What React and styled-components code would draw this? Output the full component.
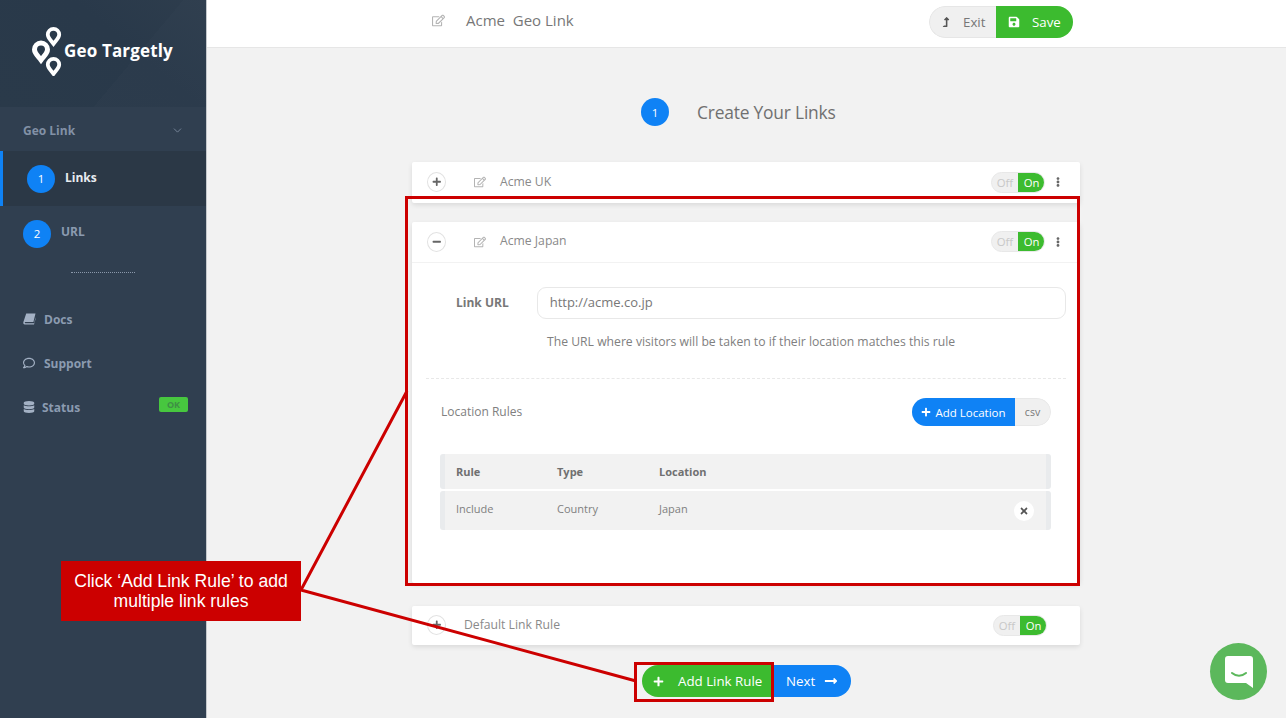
import React from "react";
import styled, { createGlobalStyle } from "styled-components";
import { ChevronDown } from "lucide-react";
import {
  FaRegEdit, FaPlus, FaMinus, FaEllipsisV, FaSave, FaTimes,
  FaRegComment, FaDatabase, FaLongArrowAltRight, FaLevelUpAlt,
} from "react-icons/fa";

const Global = createGlobalStyle`
  html, body { margin: 0; padding: 0; height: 718px; overflow: hidden; }
  body { font-family: "Open Sans", "Noto Sans", sans-serif; background: #f2f2f2; color: #666; }
  * { box-sizing: border-box; }
`;

const Page = styled.div`
  position: relative;
  display: flex;
  width: 1286px;
  height: 718px;
  overflow: hidden;
`;

const Sidebar = styled.aside`
  width: 207px;
  flex: none;
  background: #303f50;
  border-right: 1px solid #c4c8cc;
  color: #8b9bb0;
`;

const Brand = styled.div`
  height: 107px;
  background:
    linear-gradient(130deg, transparent 62%, rgba(255, 255, 255, 0.012) 62%),
    linear-gradient(40deg, #2a3a4a 0%, #29394a 60%, #2e3d4d 100%);
  display: flex;
  align-items: center;
  padding: 0 0 6px 31px;
  gap: 1px;
  color: #fff;
  font-size: 17px;
  font-weight: 700;
  letter-spacing: 0.15px;
`;

const MenuHead = styled.div`
  height: 44px;
  display: flex;
  align-items: center;
  justify-content: space-between;
  padding: 2px 22px 0 23px;
  font-size: 12px;
  font-weight: 700;
  color: #8291a6;
`;

const Step = styled.div`
  display: flex;
  align-items: center;
  height: 55px;
  gap: 10px;
  padding-left: ${p => (p.$active ? "24px" : "23px")};
  background: ${p => (p.$active ? "#2b3846" : "transparent")};
  border-left: ${p => (p.$active ? "3px solid #0f82f5" : "0")};
  color: ${p => (p.$active ? "#e8ecf0" : "#8b9bb0")};
  font-size: 12px;
  font-weight: 700;
`;

const StepNum = styled.span`
  width: 28px;
  height: 28px;
  border-radius: 50%;
  background: #0f82f5;
  color: #fff;
  display: flex;
  align-items: center;
  justify-content: center;
  font-size: 11.5px;
  font-weight: 400;
  flex: none;
`;

const StepLabel = styled.span`
  margin-bottom: ${p => (p.$active ? "2px" : "4px")};
`;

const Dots = styled.div`
  width: 64px;
  margin: 11px 0 24px 71px;
  border-top: 1px dotted #8a98aa;
`;

const NavItem = styled.div`
  display: flex;
  align-items: center;
  height: 44px;
  padding: 0 18px 0 23px;
  gap: ${p => p.$gap || 8}px;
  font-size: 12px;
  font-weight: 700;
  color: #8b9bb0;
  svg { font-size: 12px; color: #a3b1c4; flex: none; }
`;

const OkBadge = styled.span`
  margin: 0 0 5px auto;
  width: 29px;
  height: 15px;
  border-radius: 2px;
  background: #47c73f;
  color: #3f8f46;
  font-size: 9px;
  font-weight: 700;
  display: flex;
  align-items: center;
  justify-content: center;
`;

const Main = styled.main`
  flex: 1;
  min-width: 0;
  display: flex;
  flex-direction: column;
`;

const TopBar = styled.header`
  height: 48px;
  flex: none;
  background: #fff;
  border-bottom: 1px solid #e6e6e6;
  display: flex;
  align-items: center;
  padding: 0 213px 6px 225px;
  font-size: 15px;
  color: #777;
`;

const Title = styled.span`
  margin: 0 0 2px 21px;
  white-space: pre;
`;

const EditIcon = styled(FaRegEdit)`
  color: #b4b4b4;
  font-size: ${p => p.$size || 12}px;
  flex: none;
`;

const ButtonGroup = styled.div`
  margin: 2px 0 0 auto;
  display: flex;
  height: 32px;
  border-radius: 16px;
  overflow: hidden;
`;

const ExitBtn = styled.div`
  width: 67px;
  background: #f0f0f0;
  border: 1px solid #e6e6e6;
  border-right: 0;
  border-radius: 16px 0 0 16px;
  display: flex;
  align-items: center;
  padding-left: 11px;
  gap: 12px;
  font-size: 13.3px;
  color: #777;
  svg { font-size: 10px; color: #555; }
`;

const SaveBtn = styled.div`
  width: 77px;
  background: #3cbb2f;
  color: #fff;
  display: flex;
  align-items: center;
  padding-left: 12px;
  gap: 12px;
  font-size: 13.3px;
  svg { font-size: 12px; }
`;

const Content = styled.div`
  flex: 1;
  padding: 0 206px 0 205px;
`;

const Heading = styled.div`
  height: 114px;
  display: flex;
  align-items: center;
  padding: 14px 0 0 229px;
  gap: 28px;
  font-size: 17.4px;
  color: #707070;
  letter-spacing: -0.2px;
`;

const Card = styled.section`
  background: #fff;
  box-shadow: 0 2px 5px rgba(0, 0, 0, 0.1);
  border-radius: 2px;
  margin-bottom: ${p => p.$gap || 0}px;
`;

const CardHead = styled.div`
  height: ${p => p.$h || 41}px;
  display: flex;
  align-items: center;
  padding: 0 16px 1px 15px;
  font-size: 12.2px;
  color: #8a8a8a;
  border-bottom: ${p => (p.$line ? "1px solid #f2f2f2" : "0")};
`;

const RoundBtn = styled.span`
  width: 19px;
  height: 20px;
  border-radius: 50%;
  border: 1px solid #e2e2e2;
  background: #fff;
  display: flex;
  align-items: center;
  justify-content: center;
  color: #666;
  font-size: 9.5px;
  flex: none;
`;

const CardIcon = styled.span`
  display: flex;
  margin-left: 28px;
`;

const CardName = styled.span`
  margin: 0 0 2px ${p => p.$left || 14}px;
`;

const Toggle = styled.div`
  margin-left: auto;
  margin-right: ${p => p.$right || 0}px;
  display: flex;
  width: 54px;
  height: 21px;
  border-radius: 11px;
  overflow: hidden;
  background: #f0f0f0;
  border: 1px solid #e8e8e8;
  font-size: 11.3px;
`;

const ToggleOff = styled.span`
  flex: 1;
  display: flex;
  align-items: center;
  justify-content: center;
  color: #c8c8c8;
`;

const ToggleOn = styled.span`
  width: 27px;
  margin: -1px -1px -1px 0;
  display: flex;
  align-items: center;
  justify-content: center;
  background: #3cbb2f;
  color: #fff;
`;

const Kebab = styled(FaEllipsisV)`
  color: #666;
  font-size: 10px;
  margin: 0 1px 0 8px;
`;

const UrlRow = styled.div`
  display: flex;
  padding: 24px 14px 0 44px;
  gap: 28px;
`;

const UrlLabel = styled.label`
  font-size: 12px;
  font-weight: 700;
  color: #777;
  padding-top: 7px;
`;

const UrlInput = styled.div`
  flex: 1;
  height: 32px;
  border: 1px solid #e8e8e8;
  border-radius: 9px;
  display: flex;
  align-items: center;
  padding: 0 0 2px 12px;
  font-size: 13px;
  color: #777;
`;

const Hint = styled.p`
  margin: 15px 0 0 135px;
  font-size: 12.2px;
  color: #808080;
  line-height: 16px;
`;

const Divider = styled.hr`
  margin: 28px 14px 0;
  border: 0;
  border-top: 1px dashed #e8e8e8;
`;

const RulesHead = styled.div`
  display: flex;
  align-items: center;
  justify-content: space-between;
  padding: 19px 29px 0 29px;
  font-size: 12px;
  color: #808080;
`;

const RulesTitle = styled.span`
  margin-bottom: 2px;
`;

const RuleActions = styled.div`
  display: flex;
  height: 28px;
  border-radius: 14px;
  overflow: hidden;
`;

const AddLocation = styled.div`
  width: 103px;
  background: #0f82f5;
  color: #fff;
  display: flex;
  align-items: center;
  justify-content: center;
  gap: 4px;
  font-size: 11.5px;
  svg { font-size: 10px; }
`;

const Csv = styled.div`
  width: 36px;
  background: #f0f0f0;
  border: 1px solid #e8e8e8;
  border-left: 0;
  border-radius: 0 14px 14px 0;
  display: flex;
  align-items: center;
  justify-content: center;
  font-size: 10.5px;
  color: #777;
`;

const RuleTable = styled.div`
  margin: 28px 29px 0 28px;
  padding-bottom: 53px;
  display: flex;
  flex-direction: column;
  gap: 2px;
`;

const RuleRow = styled.div`
  display: grid;
  grid-template-columns: 101px 102px 1fr 20px;
  height: ${p => (p.$head ? 35 : 39)}px;
  padding: 0 12px ${p => (p.$head ? 0 : 4)}px 11px;
  align-items: center;
  background: #f2f2f2;
  border-left: 5px solid #e9ebed;
  border-right: 5px solid #e9ebed;
  border-radius: 3px;
  font-size: 11px;
  font-weight: ${p => (p.$head ? 700 : 400)};
  color: ${p => (p.$head ? "#707070" : "#808080")};
`;

const RemoveBtn = styled.span`
  width: 20px;
  height: 20px;
  margin-top: 4px;
  border-radius: 50%;
  background: #fff;
  color: #555;
  display: flex;
  align-items: center;
  justify-content: center;
  font-size: 10px;
`;

const Footer = styled.div`
  display: flex;
  padding-left: 230px;
  height: 32px;
`;

const AddRule = styled.div`
  width: 131px;
  background: #3cbb2f;
  color: #fff;
  border-radius: 16px 0 0 16px;
  display: flex;
  align-items: center;
  padding-left: 11px;
  gap: 14px;
  font-size: 13.3px;
  svg { font-size: 11px; }
`;

const NextBtn = styled.div`
  width: 78px;
  background: #0f82f5;
  color: #fff;
  border-radius: 0 16px 16px 0;
  display: flex;
  align-items: center;
  padding-left: 13px;
  gap: 9px;
  font-size: 13.3px;
  svg { font-size: 14px; }
`;

const ChatBubble = styled.div`
  position: absolute;
  left: 1210px;
  top: 643px;
  width: 57px;
  height: 57px;
  border-radius: 50%;
  background: #5cb85c;
  display: flex;
  align-items: center;
  justify-content: center;
`;

const Callout = styled.div`
  position: absolute;
  left: 61px;
  top: 561px;
  width: 240px;
  height: 60px;
  background: #cc0000;
  color: #fff;
  font-family: "Liberation Sans", Arial, sans-serif;
  font-size: 17.6px;
  line-height: 20px;
  text-align: center;
  padding-top: 10px;
  z-index: 3;
`;

const Marker = styled.div`
  position: absolute;
  left: ${p => p.$x}px;
  top: ${p => p.$y}px;
  width: ${p => p.$w}px;
  height: ${p => p.$h}px;
  border: 3px solid #cc0000;
  z-index: 2;
  pointer-events: none;
`;

const Leaders = styled.svg`
  position: absolute;
  left: 0;
  top: 0;
  z-index: 2;
  pointer-events: none;
`;

const Logo = () => (
  <svg width="32" height="50" viewBox="0 0 32 50">
    <g fill="none" stroke="#fff">
      <path d="M22.500 2.800a5.700 5.700 0 0 1 5.700 5.700c0 3.600-3.500 6.200-5.700 9.300-2.200-3.100-5.700-5.700-5.700-9.300a5.700 5.700 0 0 1 5.700-5.700z" strokeWidth="3.800" />
      <path d="M10 17a6.500 6.500 0 0 1 6.500 6.500c0 4-4 7-6.500 10.500-2.500-3.500-6.500-6.500-6.500-10.500A6.500 6.500 0 0 1 10 17z" strokeWidth="5" />
      <path d="M22.500 32.800a5.700 5.700 0 0 1 5.700 5.700c0 3.600-3.500 6.200-5.700 9.300-2.200-3.100-5.700-5.700-5.700-9.300a5.700 5.700 0 0 1 5.700-5.700z" strokeWidth="3.800" />
    </g>
  </svg>
);

// fa 4 style book, the package only has the flat one
const BookIcon = () => (
  <svg width="13" height="12" viewBox="0 0 13 12">
    <path d="M3.200 0.500h9.300L10.400 9H2.300c-.7 0-.7 1.300 0 1.300h8.900l1.300-6v2L11 11.500H1.800C.6 11.500 0 10.300.4 9z" fill="currentColor" />
  </svg>
);

const App = () => (
  <Page>
    <Global />
    <Sidebar>
      <Brand>
        <Logo />
        <span>Geo Targetly</span>
      </Brand>
      <MenuHead>
        Geo Link
        <ChevronDown size={13} strokeWidth={1.5} />
      </MenuHead>
      <Step $active>
        <StepNum>1</StepNum>
        <StepLabel $active>Links</StepLabel>
      </Step>
      <Step>
        <StepNum>2</StepNum>
        <StepLabel>URL</StepLabel>
      </Step>
      <Dots />
      <NavItem><BookIcon />Docs</NavItem>
      <NavItem $gap={9}><FaRegComment />Support</NavItem>
      <NavItem $gap={7}><FaDatabase />Status<OkBadge>OK</OkBadge></NavItem>
    </Sidebar>

    <Main>
      <TopBar>
        <EditIcon $size={13} />
        <Title>Acme  Geo Link</Title>
        <ButtonGroup>
          <ExitBtn><FaLevelUpAlt />Exit</ExitBtn>
          <SaveBtn><FaSave />Save</SaveBtn>
        </ButtonGroup>
      </TopBar>
      <Content>
        <Heading>
          <StepNum>1</StepNum>
          Create Your Links
        </Heading>

        <Card $gap={19}>
          <CardHead>
            <RoundBtn><FaPlus /></RoundBtn>
            <CardIcon><EditIcon /></CardIcon>
            <CardName>Acme UK</CardName>
            <Toggle><ToggleOff>Off</ToggleOff><ToggleOn>On</ToggleOn></Toggle>
            <Kebab />
          </CardHead>
        </Card>

        <Card $gap={23}>
          <CardHead $line>
            <RoundBtn><FaMinus /></RoundBtn>
            <CardIcon><EditIcon /></CardIcon>
            <CardName>Acme Japan</CardName>
            <Toggle><ToggleOff>Off</ToggleOff><ToggleOn>On</ToggleOn></Toggle>
            <Kebab />
          </CardHead>
          <UrlRow>
            <UrlLabel>Link URL</UrlLabel>
            <UrlInput>http://acme.co.jp</UrlInput>
          </UrlRow>
          <Hint>The URL where visitors will be taken to if their location matches this rule</Hint>
          <Divider />
          <RulesHead>
            <RulesTitle>Location Rules</RulesTitle>
            <RuleActions>
              <AddLocation><FaPlus />Add Location</AddLocation>
              <Csv>csv</Csv>
            </RuleActions>
          </RulesHead>
          <RuleTable>
            <RuleRow $head><span>Rule</span><span>Type</span><span>Location</span></RuleRow>
            <RuleRow>
              <span>Include</span><span>Country</span><span>Japan</span>
              <RemoveBtn><FaTimes /></RemoveBtn>
            </RuleRow>
          </RuleTable>
        </Card>

        <Card $gap={20}>
          <CardHead $h={39}>
            <RoundBtn><FaPlus /></RoundBtn>
            <CardName $left={18}>Default Link Rule</CardName>
            <Toggle $right={17}><ToggleOff>Off</ToggleOff><ToggleOn>On</ToggleOn></Toggle>
          </CardHead>
        </Card>

        <Footer>
          <AddRule><FaPlus />Add Link Rule</AddRule>
          <NextBtn>Next<FaLongArrowAltRight /></NextBtn>
        </Footer>
      </Content>
    </Main>

    <ChatBubble>
      <svg width="30" height="34" viewBox="0 0 30 34">
        <path d="M4 1h22a3 3 0 0 1 3 3v29l-7-5H4a3 3 0 0 1-3-3V4a3 3 0 0 1 3-3z" fill="#fff" />
        <path d="M8 18c4 3.500 10 3.500 14 0" fill="none" stroke="#5cb85c" strokeWidth="2" strokeLinecap="round" />
      </svg>
    </ChatBubble>

    <Leaders width="1286" height="718" viewBox="0 0 1286 718">
      <path d="M301 590L407 391M301 590L636 681" fill="none" stroke="#cc0000" strokeWidth="3" />
    </Leaders>
    <Marker $x={405} $y={196} $w={675} $h={390} />
    <Marker $x={634} $y={662} $w={140} $h={40} />
    <Callout>Click ‘Add Link Rule’ to add<br />multiple link rules</Callout>
  </Page>
);

export default App;
